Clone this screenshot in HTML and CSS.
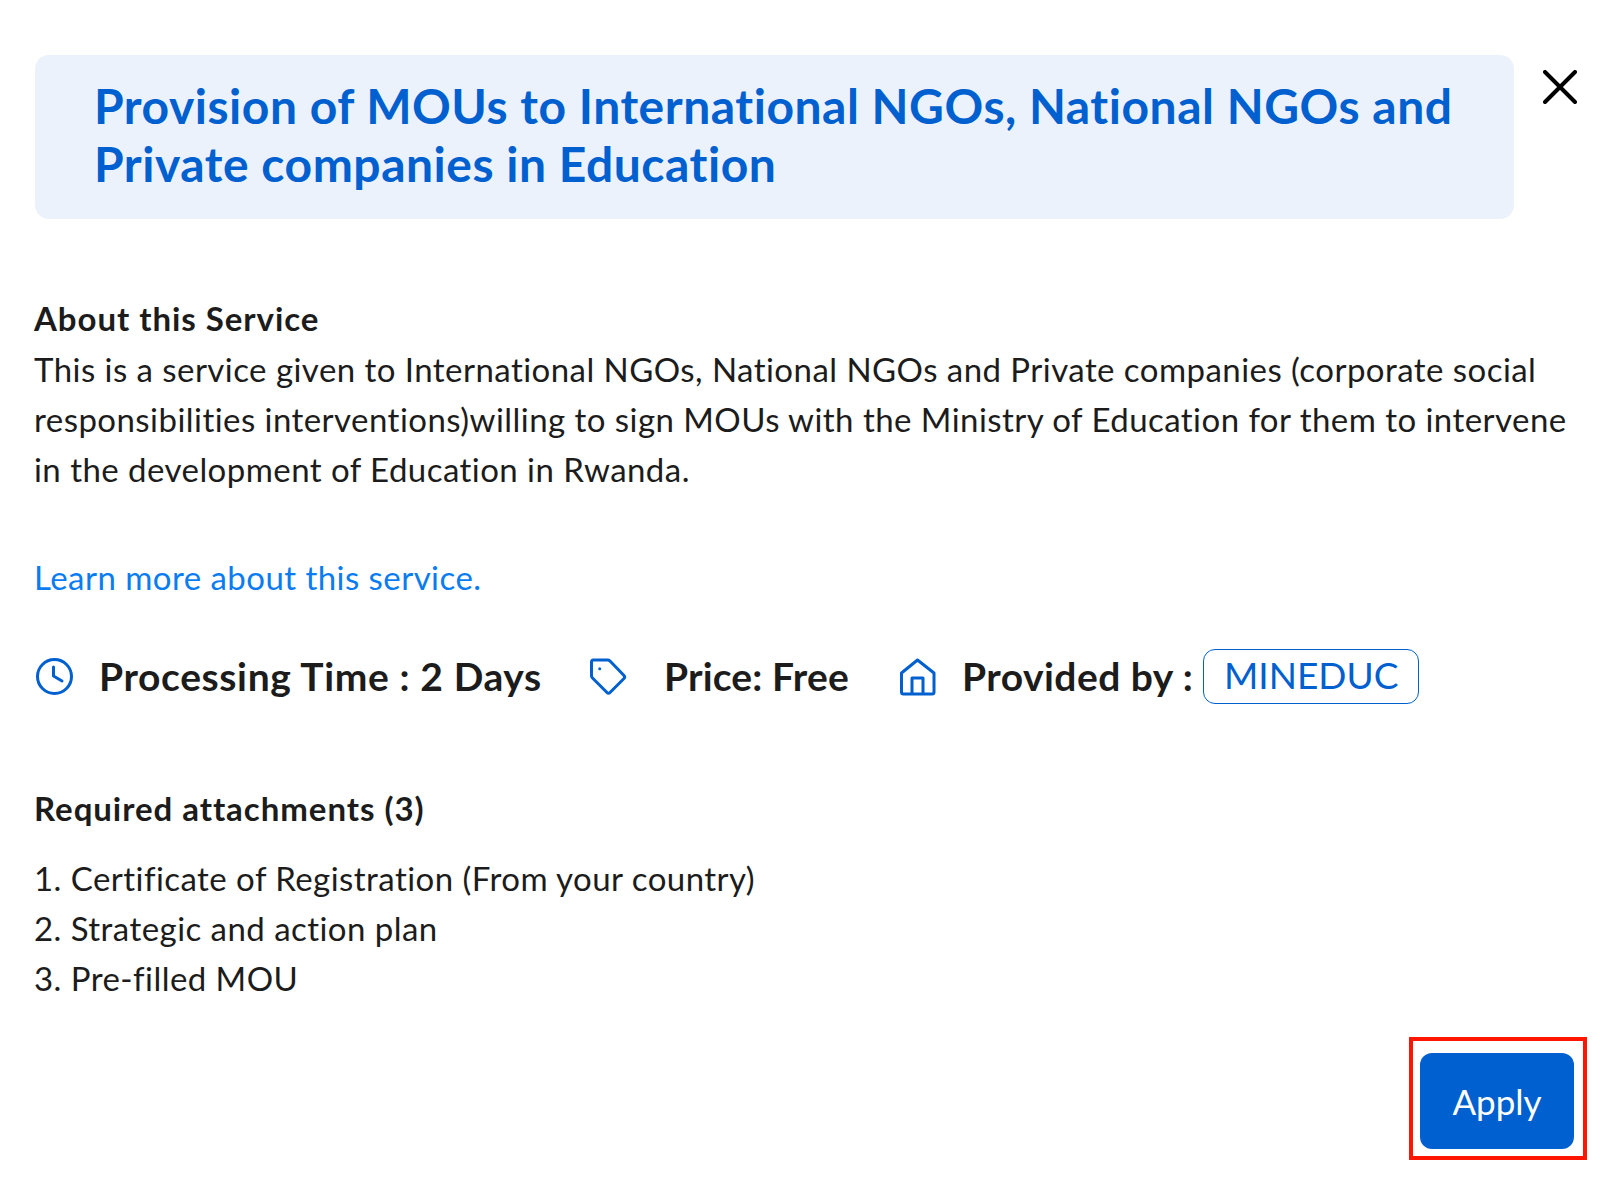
FILE: index.html
```html
<!DOCTYPE html>
<html lang="en">
<head>
  <meta charset="UTF-8" />
  <title>Provision of MOUs</title>
  <link rel="stylesheet" href="styles.css">
</head>
<body>
  <div class="header">
    <h1 class="title">Provision of MOUs to International NGOs, National NGOs and Private companies in Education</h1>
    <button class="close" aria-label="Close">
      <svg width="34" height="34" viewBox="0 0 34 34"><path d="M2 2L32 32M32 2L2 32" fill="none" stroke="#000" stroke-width="4" stroke-linecap="round"/></svg>
    </button>
  </div>

  <section class="about">
    <h2>About this Service</h2>
    <p>This is a service given to International NGOs, National NGOs and Private companies (corporate social responsibilities interventions)willing to sign MOUs with the Ministry of Education for them to intervene in the development of Education in Rwanda.</p>
  </section>

  <a class="learn" href="#">Learn more about this service.</a>

  <div class="meta">
    <div class="meta-item time">
      <svg width="38" height="38" viewBox="0 0 38 38" fill="none" stroke="#0060cf" stroke-width="3" stroke-linecap="round" stroke-linejoin="round"><circle cx="18.5" cy="18.5" r="17"/><path d="M17.5 9V18L26 23"/></svg>
      <span>Processing Time : 2 Days</span>
    </div>
    <div class="meta-item price">
      <svg width="38" height="38" viewBox="0 0 38 38" fill="none" stroke="#0060cf" stroke-width="3" stroke-linejoin="round"><path d="M4.5 2H18.5Q20 2 21 3L35 17.5Q36.5 19 35 20.5L21 34.5Q19.5 36 18 34.5L3.5 20Q2.5 19 2.5 18V4Q2.5 2 4.5 2Z"/><circle cx="10.7" cy="10.7" r="1.5" fill="#0060cf" stroke="none"/></svg>
      <span>Price: Free</span>
    </div>
    <div class="meta-item provider">
      <svg width="38" height="38" viewBox="0 0 38 38" fill="none" stroke="#0060cf" stroke-width="3" stroke-linejoin="round"><path d="M2.5 15L18.5 2L35 15V34Q35 36 33 36H4.5Q2.5 36 2.5 34Z"/><path d="M13 36V20H24V36"/></svg>
      <span>Provided by :</span>
      <span class="pill">MINEDUC</span>
    </div>
  </div>

  <section class="attachments">
    <h2>Required attachments (3)</h2>
    <ol>
      <li>Certificate of Registration (From your country)</li>
      <li>Strategic and action plan</li>
      <li>Pre-filled MOU</li>
    </ol>
  </section>

  <div class="actions">
    <div class="highlight">
      <button class="apply">Apply</button>
    </div>
  </div>
</body>
</html>
```

FILE: styles.css
```css
* {
  margin: 0;
  padding: 0;
  box-sizing: border-box;
}
body {
  background: #fff;
  font-family: "Lato", sans-serif;
  font-variant-ligatures: none;
  color: #1c1c1c;
  font-size: 33px;
  letter-spacing: 0.45px;
  line-height: 50px;
  padding: 55px 13px 0 34px;
}
button {
  border: none;
  background: none;
  font-family: inherit;
}
.header {
  display: flex;
  align-items: flex-start;
}
.title {
  width: 1479px;
  margin-left: 1px;
  height: 164px;
  padding: 22px 40px 0 59px;
  background: #ebf2fc;
  border-radius: 14px;
  color: #0060cf;
  font-size: 48px;
  letter-spacing: 0.52px;
  line-height: 58px;
  font-weight: 700;
}
.close {
  margin: 15px 0 0 29px;
  height: 34px;
  display: block;
}
.about {
  margin-top: 74px;
}
.about p {
  margin-top: 1px;
}
h2 {
  font-size: 33px;
  font-weight: 700;
  letter-spacing: 0.95px;
}
.learn {
  display: block;
  margin-top: 58px;
  color: #0a7cf2;
  text-decoration: none;
}
.meta {
  display: flex;
  align-items: center;
  margin-top: 46px;
  height: 56px;
  font-size: 39px;
  font-weight: 700;
}
.meta-item {
  display: flex;
  align-items: center;
}
.meta-item svg {
  margin-top: 2px;
}
.time {
  width: 553px;
  margin-left: 2px;
  letter-spacing: 0.62px;
}
.time svg {
  margin-right: 25px;
}
.price {
  width: 310px;
  letter-spacing: 0.15px;
}
.price svg {
  margin-right: 37px;
}
.provider {
  letter-spacing: 0.45px;
}
.provider svg {
  margin-right: 25px;
}
.pill {
  margin-left: 10px;
  width: 216px;
  height: 55px;
  border: 1.5px solid #0060cf;
  border-radius: 12px;
  color: #0060cf;
  font-size: 37px;
  letter-spacing: 0;
  font-weight: 400;
  text-align: center;
  line-height: 50px;
}
.attachments {
  margin-top: 79px;
}
.attachments ol {
  margin-top: 20px;
  list-style-position: inside;
}
.actions {
  display: flex;
  justify-content: flex-end;
  margin-top: 34px;
}
.highlight {
  width: 178px;
  height: 123px;
  padding: 12px 9px 0 7px;
  border: 4px solid #ff1500;
}
.apply {
  display: block;
  width: 154px;
  height: 96px;
  background: #0060cf;
  border-radius: 12px;
  color: #fff;
  font-size: 35px;
  letter-spacing: 0;
}
```
